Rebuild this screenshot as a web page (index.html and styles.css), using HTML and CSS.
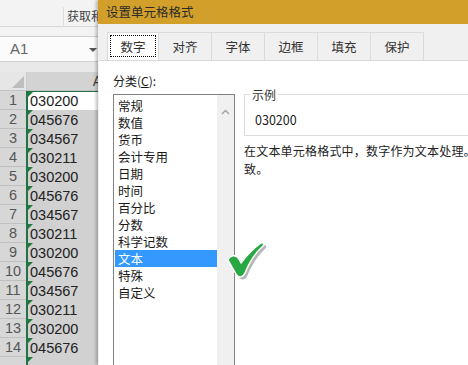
FILE: index.html
```html
<!DOCTYPE html>
<html lang="zh-CN">
<head>
    <meta charset="UTF-8">
    <title>设置单元格格式</title>
    <link rel="stylesheet" href="styles.css">
</head>
<body>
    <div class="screen">
        <div class="sheet">
            <div class="ribbon"><span class="ribbon-group">获取和转换</span></div>
            <div class="namebar">
                <div class="namebox">A1<span class="drop"></span></div>
            </div>
            <div class="gap"></div>
            <div class="colhead">
                <div class="corner"></div>
                <div class="col-a">A</div>
            </div>
            <div id="rows"></div>
        </div>

        <div class="dialog">
            <div class="titlebar">设置单元格格式</div>
            <div class="tabs">
                <div class="tab active"><span class="focus">数字</span></div>
                <div class="tab">对齐</div>
                <div class="tab">字体</div>
                <div class="tab">边框</div>
                <div class="tab">填充</div>
                <div class="tab">保护</div>
            </div>
            <div class="panel">
                <div class="category">
                    <div class="label">分类(<u>C</u>):</div>
                    <div class="listbox">
                        <ul class="items">
                            <li>常规</li>
                            <li>数值</li>
                            <li>货币</li>
                            <li>会计专用</li>
                            <li>日期</li>
                            <li>时间</li>
                            <li>百分比</li>
                            <li>分数</li>
                            <li>科学记数</li>
                            <li class="selected">文本</li>
                            <li>特殊</li>
                            <li>自定义</li>
                        </ul>
                        <div class="scrollbar">
                            <svg width="9" height="6" viewBox="0 0 9 6"><path d="M1 5 L4.5 1.5 L8 5" fill="none" stroke="#a0a0a0" stroke-width="1.3"/></svg>
                        </div>
                    </div>
                </div>
                <div class="detail">
                    <div class="sample">
                        <span class="legend">示例</span>
                        <div class="sample-value">030200</div>
                    </div>
                    <p class="desc">在文本单元格格式中，数字作为文本处理。单元格显示的内容与输入的内容完全一<br>致。</p>
                </div>

                <!-- green tick pointing at the selected item -->
                <svg class="tick" width="42" height="40" viewBox="0 0 42 40">
                    <path d="M1 18 C3 13 9 12 12 17 L14 21 C20 13 27 6 34 1 C36 0 38 2 36 4 C28 11 22 21 18 31 C16 36 11 36 9 32 Z" fill="#6e6e6e" opacity="0.5" transform="translate(2.5 2.5)"/>
                    <path d="M1 18 C3 13 9 12 12 17 L14 21 C20 13 27 6 34 1 C36 0 38 2 36 4 C28 11 22 21 18 31 C16 36 11 36 9 32 Z" fill="#27a843" stroke="#ffffff" stroke-width="1.5" stroke-linejoin="round"/>
                </svg>
            </div>
        </div>
    </div>

    <script>
        const values = ['030200', '045676', '034567', '030211'];
        const rows = document.getElementById('rows');

        for (let i = 1; i <= 15; i++) {
            const cls = i === 1 ? 'cell first' : 'cell';
            rows.innerHTML += `<div class="row"><div class="num">${i < 15 ? i : ''}</div><div class="${cls}">${i < 15 ? values[(i - 1) % 4] : ''}</div></div>`;
        }
    </script>
</body>
</html>
```

FILE: styles.css
```css
body {
    margin: 0;
    background-color: #ffffff;
    font-family: 'Liberation Sans', 'Noto Sans CJK SC', sans-serif;
}
.screen {
    display: flex;
    width: 468px;
    height: 365px;
    overflow: hidden;
    position: relative;
}

/* spreadsheet behind the dialog */
.sheet {
    width: 98px;
    flex-shrink: 0;
    background-color: #ececec;
    overflow: hidden;
}
.ribbon {
    height: 27px;
    background-color: #f3f3f3;
    border-bottom: 1px solid #d8d8d8;
    white-space: nowrap;
    box-sizing: border-box;
}
.ribbon-group {
    display: inline-block;
    margin-left: 63px;
    padding-left: 3px;
    margin-top: 7px;
    height: 20px;
    border-left: 1px solid #dedede;
    font-size: 12px;
    color: #444;
    font-family: 'Noto Sans CJK SC', sans-serif;
}
.namebar {
    padding-top: 9px;
    background-color: #f3f3f3;
}
.namebox {
    height: 26px;
    background-color: #fbfbfb;
    border-top: 1px solid #cfcfcf;
    border-bottom: 1px solid #cfcfcf;
    box-sizing: border-box;
    padding-left: 10px;
    line-height: 24px;
    font-size: 15px;
    color: #666;
    position: relative;
}
.drop {
    position: absolute;
    right: 1px;
    top: 11px;
    border-left: 4px solid transparent;
    border-right: 4px solid transparent;
    border-top: 4px solid #555;
}
.gap {
    height: 10px;
    background-color: #e9e9e9;
}
.colhead {
    display: flex;
    height: 19px;
    background-color: #e6e6e6;
    border-bottom: 1px solid #c3c3c3;
    box-sizing: border-box;
}
.corner {
    width: 26px;
    position: relative;
    border-right: 1px solid #c9c9c9;
}
.corner::after {
    content: '';
    position: absolute;
    right: 2px;
    bottom: 2px;
    border-left: 12px solid transparent;
    border-bottom: 12px solid #bdbdbd;
}
.col-a {
    flex: 1;
    background-color: #d3d3d3;
    text-align: right;
    font-size: 14px;
    line-height: 19px;
    color: #444;
    margin-right: -4px;
}
.row {
    display: flex;
    height: 19px;
}
.num {
    width: 26px;
    background-color: #d7d7d7;
    border-bottom: 1px solid #c0c0c0;
    box-sizing: border-box;
    text-align: center;
    font-size: 14.5px;
    line-height: 19px;
    color: #555;
}
.cell {
    flex: 1;
    background-color: #d1d1d1;
    border-left: 2px solid #217346;
    padding-left: 2px;
    font-size: 14.5px;
    line-height: 20px;
    color: #222;
    position: relative;
}
.cell::before {
    content: '';
    position: absolute;
    left: 0;
    top: 0;
    border-top: 5px solid #1e7b3c;
    border-right: 5px solid transparent;
}
.cell.first {
    background-color: #ffffff;
    border-top: 1px solid #217346;
    line-height: 18px;
}

/* format cells dialog */
.dialog {
    flex: 1;
    background-color: #f0f0f0;
    border-right: 2px solid #3c3c3c;
    box-shadow: -2px 0 3px rgba(0, 0, 0, 0.25);
    display: flex;
    flex-direction: column;
    font-family: 'Noto Sans CJK SC', sans-serif;
    font-size: 12px;
    color: #1a1a1a;
    position: relative;
    z-index: 1;
}
.titlebar {
    height: 27px;
    background-color: #d2a02a;
    padding-left: 8px;
    line-height: 24px;
    font-size: 12.5px;
    color: #2a2a2a;
}
.tabs {
    display: flex;
    padding-left: 9px;
    padding-top: 8px;
    height: 36px;
    box-sizing: border-box;
}
.tab {
    width: 53px;
    height: 28px;
    box-sizing: border-box;
    border: 1px solid #dadada;
    border-left: none;
    border-bottom: none;
    text-align: center;
    line-height: 27px;
    font-size: 12.5px;
    color: #333;
}
.tab.active {
    width: 52px;
    background-color: #ffffff;
    border-left: 1px solid #dadada;
    padding: 2px;
    line-height: 21px;
}
.focus {
    display: block;
    border: 1px dotted #000;
    height: 22px;
    box-sizing: border-box;
}
.panel {
    flex: 1;
    background-color: #ffffff;
    border-top: 1px solid #dadada;
    margin-left: 1px;
    display: flex;
    padding-left: 14px;
    position: relative;
}
.category {
    width: 122px;
    flex-shrink: 0;
}
.label {
    padding-top: 11px;
    height: 22px;
}
.label u {
    text-decoration: underline;
}
.listbox {
    display: flex;
    border: 1px solid #828282;
    height: 300px;
    box-sizing: border-box;
    padding: 2px 0 0 1px;
}
.items {
    flex: 1;
    list-style: none;
    margin: 0;
    padding: 0;
}
.items li {
    height: 17px;
    line-height: 17px;
    padding-left: 3px;
    font-size: 12.5px;
}
.items li.selected {
    background-color: #3399ff;
    color: #ffffff;
}
.scrollbar {
    width: 17px;
    background-color: #f0f0f0;
    margin-top: -2px;
    text-align: center;
    padding-top: 6px;
    box-sizing: border-box;
}
.detail {
    flex: 1;
    padding-left: 9px;
    padding-top: 33px;
    white-space: nowrap;
}
.sample {
    border: 1px solid #dcdcdc;
    border-right: none;
    height: 42px;
    position: relative;
    padding-left: 10px;
    padding-top: 15px;
    box-sizing: border-box;
}
.legend {
    position: absolute;
    left: 5px;
    top: -9px;
    background-color: #ffffff;
    padding: 0 2px;
    color: #333;
}
.sample-value {
    font-size: 12.5px;
    color: #222;
}
.desc {
    margin: 6px 0 0 0;
    line-height: 18px;
    color: #222;
    letter-spacing: 0.2px;
}
.tick {
    position: absolute;
    left: 128px;
    top: 181px;
}
```
